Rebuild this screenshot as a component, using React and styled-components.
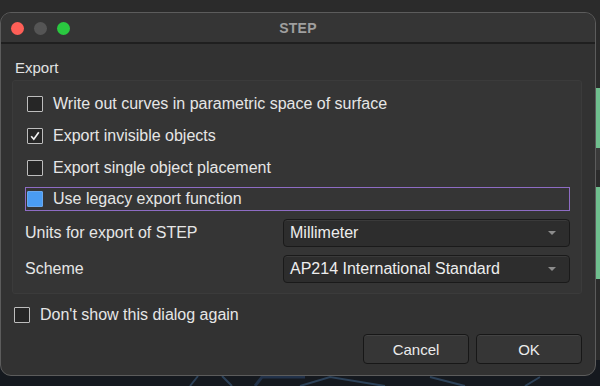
import React from 'react';
import styled, { createGlobalStyle } from 'styled-components';

const GlobalStyle = createGlobalStyle`
  html, body {
    margin: 0;
    padding: 0;
    background: #1b1d22;
  }
  * {
    box-sizing: border-box;
  }
`;

const Desktop = styled.div`
  position: relative;
  width: 600px;
  height: 386px;
  overflow: hidden;
  background: #2b2b2b;
  font-family: "Liberation Sans", Arial, sans-serif;
`;

const Backdrop = styled.svg`
  position: absolute;
  left: 0;
  top: 0;
`;

const Window = styled.div`
  position: absolute;
  left: 0;
  top: 12px;
  width: 596px;
  height: 364px;
  background: #323232;
  border: 1px solid #5c5c5c;
  border-radius: 11px;
  overflow: hidden;
  display: flex;
  flex-direction: column;
`;

const TitleBar = styled.div`
  position: relative;
  height: 31px;
  flex: none;
  display: flex;
  align-items: center;
  justify-content: center;
  background: #353535;
  border-bottom: 2px solid #1f1f1f;
`;

const Lights = styled.div`
  position: absolute;
  left: 10px;
  top: 9px;
  display: flex;
  gap: 10px;
`;

const Light = styled.span`
  width: 13px;
  height: 13px;
  border-radius: 50%;
  background: ${p => p.$color};
`;

const Title = styled.div`
  font-size: 14px;
  font-weight: 700;
  color: #9f9f9f;
  letter-spacing: 0.2px;
`;

const Body = styled.div`
  flex: 1;
  display: flex;
  flex-direction: column;
  padding: 14px 13px 0 11px;
`;

const GroupTitle = styled.div`
  font-size: 15px;
  color: #e2e2e2;
  margin: 0 0 2px 3px;
  line-height: 20px;
`;

const Group = styled.div`
  background: #353535;
  border: 1px solid #3b3b3b;
  border-radius: 3px;
  padding: 7px 11px 6px 12px;
  display: flex;
  flex-direction: column;
`;

const CheckRow = styled.label`
  display: flex;
  align-items: center;
  gap: 10px;
  height: ${p => (p.$tight ? '24px' : '32px')};
  margin: ${p => (p.$focused ? '3px 0 4px 0' : '0')};
  padding-left: 1px;
  border: 1px solid ${p => (p.$focused ? '#8e6cc4' : 'transparent')};
  font-size: 16px;
  color: #e6e6e6;
`;

const Box = styled.span`
  flex: none;
  width: 16px;
  height: 16px;
  border: 1px solid ${p => (p.$accent ? '#6aa8ee' : '#bdbdbd')};
  background: ${p => (p.$accent ? '#4a9cf2' : '#262626')};
  border-radius: 1px;
  display: flex;
  align-items: center;
  justify-content: center;
`;

const FieldRow = styled.div`
  display: flex;
  align-items: center;
  height: 36px;
  font-size: 16px;
  color: #e6e6e6;
`;

const FieldLabel = styled.span`
  width: 258px;
  flex: none;
`;

const Combo = styled.div`
  flex: 1;
  height: 28px;
  display: flex;
  align-items: center;
  justify-content: space-between;
  padding: 0 13px 0 6px;
  background: #2d2d2d;
  border: 1px solid #1a1a1a;
  border-radius: 4px;
  box-shadow: inset 0 1px 0 #3a3a3a;
  color: #ededed;
  font-size: 16px;
`;

const Arrow = styled.span`
  width: 0;
  height: 0;
  border-left: 4px solid transparent;
  border-right: 4px solid transparent;
  border-top: 4px solid #8c8c8c;
`;

const Footer = styled.div`
  display: flex;
  flex-direction: column;
  padding: 9px 0 0 0;
`;

const ButtonRow = styled.div`
  display: flex;
  justify-content: flex-end;
  gap: 7px;
  margin-top: 7px;
`;

const Button = styled.button`
  width: 106px;
  height: 30px;
  background: #363636;
  border: 1px solid #171717;
  border-radius: 4px;
  box-shadow: inset 0 1px 0 #434343;
  color: #ebebeb;
  font-family: "Liberation Sans", Arial, sans-serif;
  font-size: 15px;
`;

const Check = ({ checked, accent }) => (
  <Box $accent={accent}>
    {checked && (
      <svg width="12" height="12" viewBox="0 0 12 12">
        <path d="M2.2 6.2 L4.8 9.2 L9.8 2.2" fill="none" stroke="#f0f0f0" strokeWidth="1.7" />
      </svg>
    )}
  </Box>
);

const options = [
  { label: 'Write out curves in parametric space of surface', checked: false },
  { label: 'Export invisible objects', checked: true },
  { label: 'Export single object placement', checked: false },
];

export default function App() {
  return (
    <Desktop>
      <GlobalStyle />
      <Backdrop width="600" height="386" viewBox="0 0 600 386">
        <rect x="0" y="360" width="600" height="26" fill="#15191f" />
        <rect x="596" y="88" width="4" height="60" fill="#6fbf8e" />
        <rect x="596" y="148" width="4" height="22" fill="#3a3a3a" />
        <rect x="596" y="187" width="4" height="92" fill="#6fbf8e" />
        <path d="M190 386 L198 376 M232 386 L222 376 M300 386 L330 377 L385 386 M430 377 L465 386 M525 386 L540 377" stroke="#2c4158" strokeWidth="2" fill="none" />
        <path d="M255 386 L262 377 L305 377" stroke="#22324a" strokeWidth="3" fill="none" />
      </Backdrop>
      <Window>
        <TitleBar>
          <Lights>
            <Light $color="#fe5f57" />
            <Light $color="#555555" />
            <Light $color="#2ac840" />
          </Lights>
          <Title>STEP</Title>
        </TitleBar>
        <Body>
          <GroupTitle>Export</GroupTitle>
          <Group>
            {options.map(o => (
              <CheckRow key={o.label}>
                <Check checked={o.checked} />
                {o.label}
              </CheckRow>
            ))}
            <CheckRow $focused $tight>
              <Check accent />
              Use legacy export function
            </CheckRow>
            <FieldRow>
              <FieldLabel>Units for export of STEP</FieldLabel>
              <Combo>
                Millimeter
                <Arrow />
              </Combo>
            </FieldRow>
            <FieldRow>
              <FieldLabel>Scheme</FieldLabel>
              <Combo>
                AP214 International Standard
                <Arrow />
              </Combo>
            </FieldRow>
          </Group>
          <Footer>
            <CheckRow $tight>
              <Check />
              Don't show this dialog again
            </CheckRow>
            <ButtonRow>
              <Button>Cancel</Button>
              <Button>OK</Button>
            </ButtonRow>
          </Footer>
        </Body>
      </Window>
    </Desktop>
  );
}
